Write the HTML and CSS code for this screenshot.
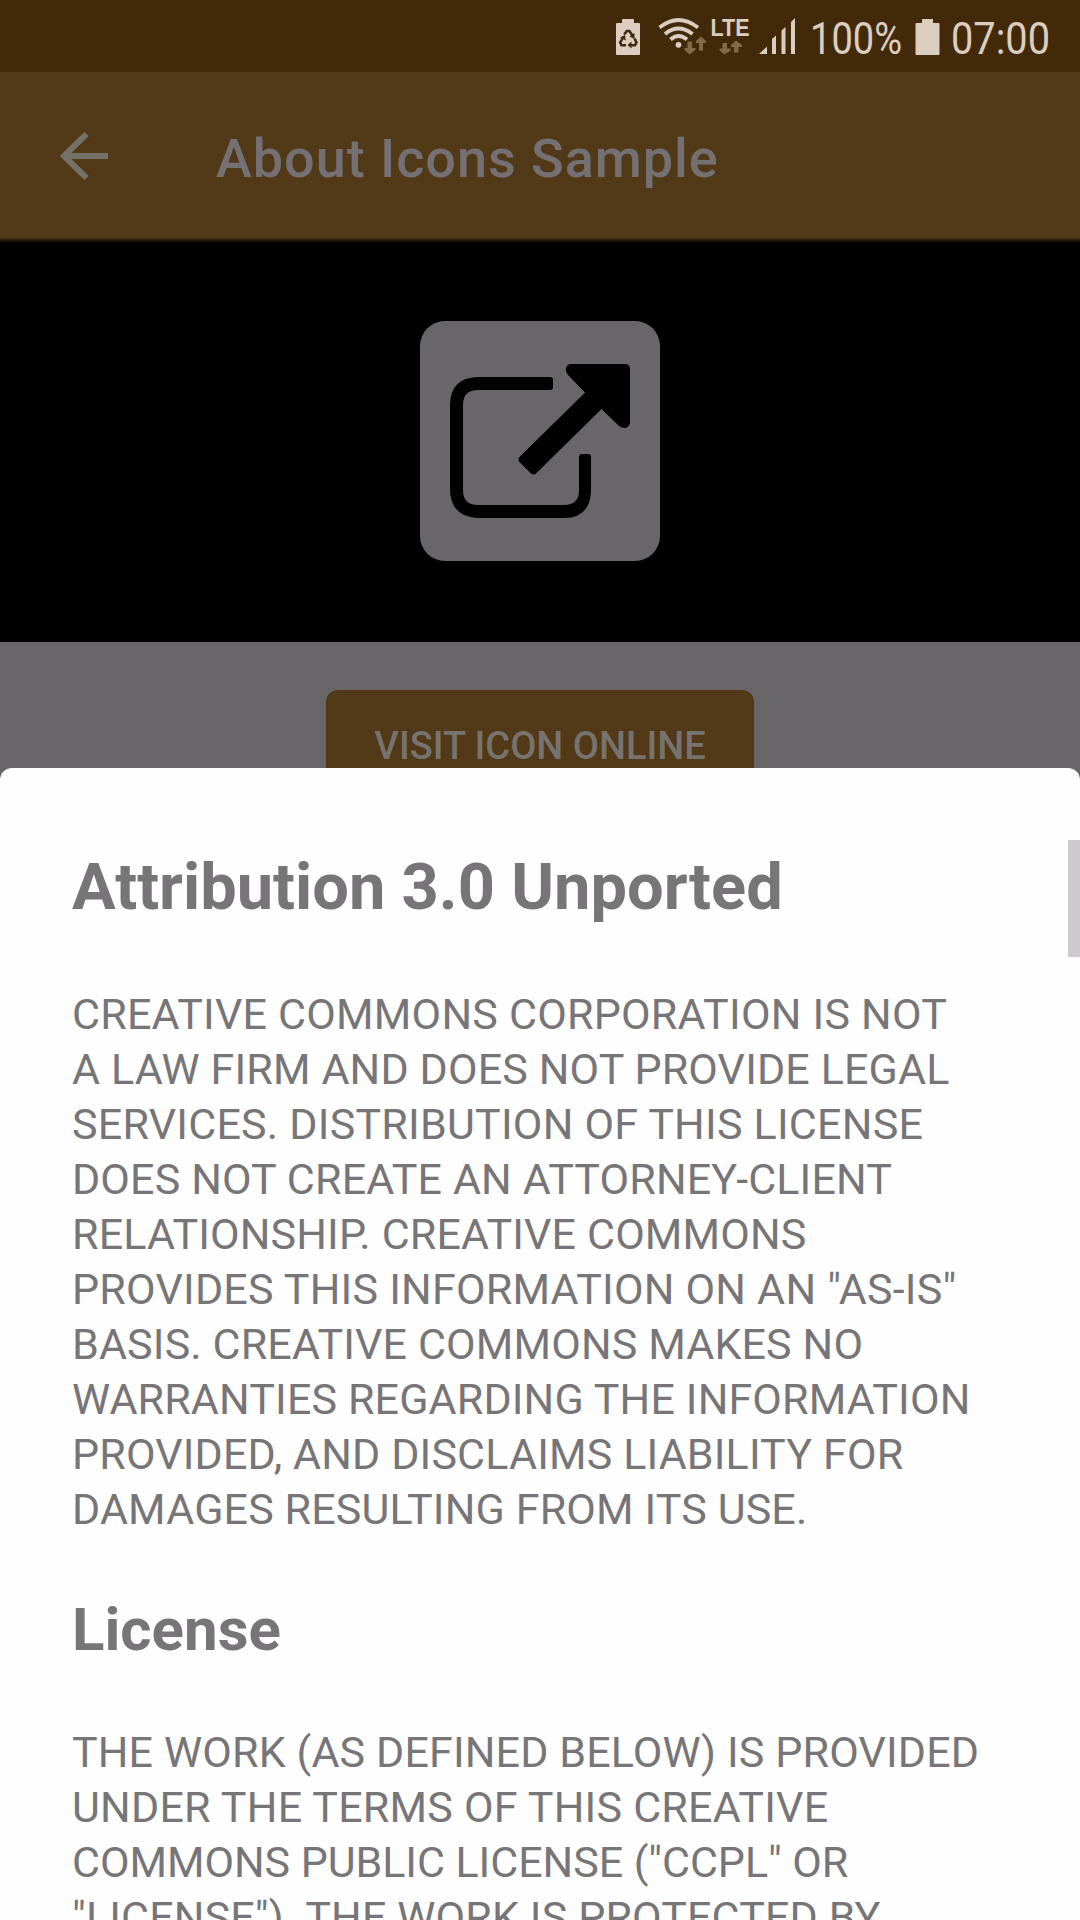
FILE: index.html
```html
<!DOCTYPE html>
<html lang="en">
<head>
<meta charset="utf-8">
<title>About Icons Sample</title>
<link rel="stylesheet" href="styles.css">
</head>
<body>
<div class="screen">
  <header class="status">
    <svg class="status-icons" width="200" height="72" viewBox="0 0 200 72" fill="#dbcec1">
      <path d="M7 19h4.500v4h11.500a1 1 0 0 1 1 1v30a1 1 0 0 1-1 1H1a1 1 0 0 1-1-1V24a1 1 0 0 1 1-1h5v-3a1 1 0 0 1 1-1h10a1 1 0 0 1 1 1v4H7z"/>
      <g fill="none" stroke="#412909" stroke-width="2.600">
        <path d="M8.200 34.500l2.600-3.500h2.600l3.400 5"/>
        <path d="M18.500 38.500l2 4-1.500 2.700h-5"/>
        <path d="M10 45.200H5.500L4.200 42.500l3-5.500"/>
      </g>
      <path fill="#412909" d="M18.500 33v6l-5-2.500zM15.500 41.500v7l-4-3.500zM4 37.500l5-2.500.8 5.500z"/>
      <g fill="none" stroke="#dbcec1" stroke-width="3.800">
        <path d="M43.500 27.500Q62.500 12.500 82 27.500"/>
        <path d="M49 34Q62.500 23 76.500 34"/>
        <path d="M54.500 39.500Q62.500 32.500 71 39.500"/>
      </g>
      <circle cx="62.500" cy="44.800" r="2.900"/>
      <g fill="#82694a">
        <path d="M71.500 41.500h4.500v6.500h3.500v2l-6 4.500-5-4.500v-2h3zM83 50.500h4V43h3v-2l-5-4.500-5 4.500v2h3z"/>
        <path d="M106.500 43h4.500v5.500h3.500v2l-6 4-5-4v-2h3zM118 52.500h4.500V47h3.500v-2l-6-4.500-5 4.500v2h3z"/>
      </g>
      <text class="lte" x="94.500" y="36" textLength="39" lengthAdjust="spacingAndGlyphs">LTE</text>
      <path d="M143 54l8-7.500V54zM156 54V39l4-3.500V54zM165.500 54V30.500l4-3.500v27zM175 54V22l4-4v36z"/>
    </svg>
    <svg class="status-values" width="264" height="72" viewBox="0 0 264 72" fill="#dbcec1">
      <text class="digits" x="-6" y="54" textLength="92" lengthAdjust="spacingAndGlyphs">100%</text>
      <path d="M106 19h11v4h5.500a1 1 0 0 1 1 1v30a1 1 0 0 1-1 1h-22a1 1 0 0 1-1-1V24a1 1 0 0 1 1-1h5.500z"/>
      <text class="digits" x="135" y="54" textLength="99" lengthAdjust="spacingAndGlyphs">07:00</text>
    </svg>
  </header>
  <div class="toolbar">
    <svg class="back" width="48" height="48" viewBox="0 0 48 48" fill="none" stroke="#747168" stroke-width="6">
      <path d="M48 24H4M26.500 2L4 24l22.500 22"/>
    </svg>
    <h1 class="title">About Icons Sample</h1>
  </div>
  <section class="hero">
    <svg width="240" height="240" viewBox="0 0 240 240">
      <rect width="240" height="240" rx="25" fill="#69666a"/>
      <path d="M57 56h73q3 0 3 3v7q0 3-3 3H58q-15 0-15 15v85q0 15 15 15h86q15 0 15-15v-33q0-3 3-3h6q3 0 3 3v34q-1 27-27 27H57Q30 195 30 168V83Q31 57 57 56z"/>
      <path d="M151 43h54q5 0 5 5v54q-1 5-6 5-3 0-6-3l-16.500-16-65 64q-3 3-6 0l-11-11q-2-3 0-5L165 71.500 148 54q-3-4-2-7 1-4 5-4z"/>
    </svg>
  </section>
  <main class="content">
    <div class="visit">VISIT ICON ONLINE</div>
  </main>
  <article class="sheet">
    <h2 class="heading">Attribution 3.0 Unported</h2>
    <p class="legal"><span class="loose">CREATIVE COMMONS CORPORATION IS NOT</span><br>A LAW FIRM AND DOES NOT PROVIDE LEGAL<br><span class="loose">SERVICES. DISTRIBUTION OF THIS LICENSE</span><br>DOES NOT CREATE AN ATTORNEY-CLIENT<br>RELATIONSHIP. CREATIVE COMMONS<br><span class="loose">PROVIDES THIS INFORMATION ON AN "AS-IS"</span><br>BASIS. CREATIVE COMMONS MAKES NO<br>WARRANTIES REGARDING THE INFORMATION<br>PROVIDED, AND DISCLAIMS LIABILITY FOR<br>DAMAGES RESULTING FROM ITS USE.</p>
    <h3 class="subheading">License</h3>
    <p class="legal">THE WORK (AS DEFINED BELOW) IS PROVIDED<br><span class="loose">UNDER THE TERMS OF THIS CREATIVE</span><br><span class="tight">COMMONS PUBLIC LICENSE ("CCPL" OR</span><br>"LICENSE"). THE WORK IS PROTECTED BY</p>
    <div class="scrollbar"></div>
  </article>
</div>
</body>
</html>
```
FILE: styles.css
```css
* { box-sizing: border-box; margin: 0; padding: 0; }
body { font-family: Roboto, "Liberation Sans", sans-serif; background: #69666a; }
svg { display: block; flex: none; }
.screen { position: relative; width: 1080px; height: 1920px; overflow: hidden; background: #69666a; }
.status { display: flex; height: 72px; padding-left: 616px; background: #412909; }
.status-values { overflow: visible; }
.lte { font: 700 23px "Liberation Sans", sans-serif; }
.digits { font: 400 45px Roboto, sans-serif; }
.toolbar { display: flex; align-items: center; height: 165px; padding: 0 60px; gap: 108px; background: #523a18; }
.back { margin-top: 3px; }
.title { font-size: 54px; font-weight: 500; line-height: 64px; letter-spacing: 0.950px; color: #747074; padding-top: 8px; white-space: nowrap; }
.hero { display: flex; justify-content: center; height: 405px; padding-top: 84px; background: linear-gradient(#523a18, #000 6px); }
.content { display: flex; justify-content: center; padding-top: 48px; }
.visit { width: 428px; height: 108px; border-radius: 12px; background: #523918; color: #77736f; font-size: 38px; font-weight: 500; line-height: 113px; text-align: center; white-space: nowrap; }
.sheet { position: absolute; left: 0; top: 768px; width: 1080px; height: 1152px; padding: 80px 72px 0; border-radius: 12px 12px 0 0; background: #fefefe; color: #777578; overflow: hidden; white-space: nowrap; }
.heading { font-size: 65px; font-weight: 700; line-height: 78px; }
.legal { font-size: 43px; line-height: 55px; letter-spacing: 0.140px; }
.loose { letter-spacing: 0.220px; }
.tight { letter-spacing: -0.060px; }
.heading + .legal { margin-top: 61px; }
.subheading { margin-top: 57px; font-size: 60px; font-weight: 700; line-height: 72px; }
.subheading + .legal { margin-top: 59px; }
.scrollbar { position: absolute; right: 0; top: 72px; width: 12px; height: 117px; background: #cdcbce; }
```
